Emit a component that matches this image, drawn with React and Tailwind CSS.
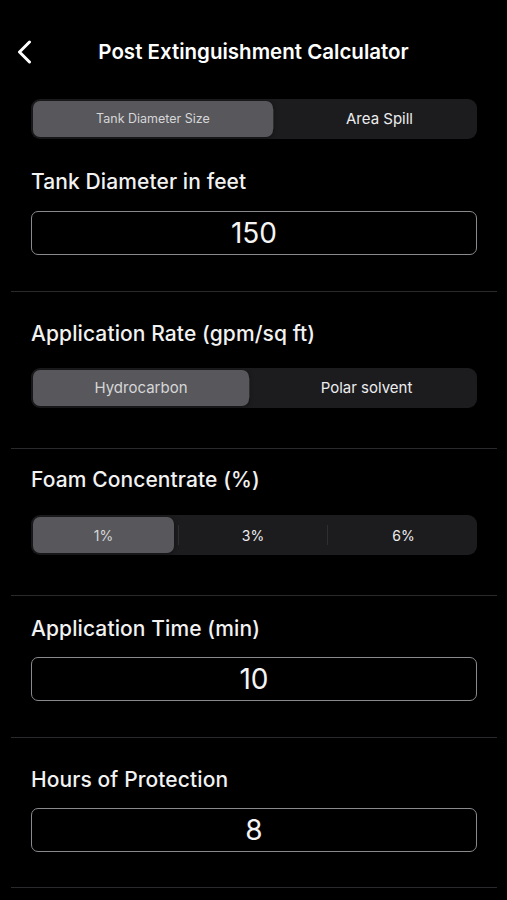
import React, { useState } from 'react';

const Segmented = ({ options, widths, value, onChange, textClass }) => {
    return (
        <div className="mx-[31px] w-[446px] h-[40px] rounded-[9px] bg-[#1c1c1e] p-[2px] flex">
            {options.map((opt, i) => {
                const selected = value === i;
                return (
                    <div key={opt} className={`flex items-center ${widths[i]}`}>
                        {i > 0 && <div className="w-px h-[20px] bg-[#2e2e31]" />}
                        <button
                            type="button"
                            onClick={() => onChange(i)}
                            className={`flex-1 h-full rounded-[7px] flex items-center justify-center ${textClass[i]} ${selected
                                ? 'bg-[#58585c] text-[#d6d6d8] shadow-[0_1px_4px_rgba(0,0,0,0.4)]'
                                : 'text-[#ececee]'
                                }`}
                        >
                            {opt}
                        </button>
                    </div>
                );
            })}
        </div>
    );
};

const Label = ({ children, className }) => (
    <div className={`mx-[31px] h-[24px] leading-[24px] text-[21px] font-medium text-[#f2f2f2] tracking-[0.1px] ${className}`}>
        {children}
    </div>
);

const NumberField = ({ value, onChange, className }) => (
    <div className={`mx-[31px] w-[446px] h-[44px] rounded-[7px] border border-[#8a8a8e] flex items-center justify-center ${className}`}>
        <input
            value={value}
            onChange={(e) => onChange(e.target.value)}
            className="w-full bg-transparent text-center text-[28px] font-normal text-[#f4f4f4] outline-none"
        />
    </div>
);

const Divider = ({ className }) => (
    <div className={`ml-[11px] w-[486px] h-px bg-[#2a2a2c] ${className}`} />
);

export default function App() {
    const [mode, setMode] = useState(0);
    const [rate, setRate] = useState(0);
    const [foam, setFoam] = useState(0);
    const [diameter, setDiameter] = useState('150');
    const [time, setTime] = useState('10');
    const [hours, setHours] = useState('8');

    return (
        <div className="w-[507px] min-h-[900px] bg-black text-white font-['Inter',sans-serif] overflow-hidden">
            {/* Header */}
            <div className="mt-[30px] h-[44px] grid grid-cols-[1fr_auto_1fr] items-center">
                <div className="pl-[17px] flex items-center">
                    <svg width="15" height="24" viewBox="0 0 15 24" fill="none">
                        <polyline
                            points="12.5,2 2.5,12 12.5,22"
                            stroke="#ffffff"
                            strokeWidth="3"
                            strokeLinecap="round"
                            strokeLinejoin="round"
                        />
                    </svg>
                </div>
                <div className="text-[20.5px] font-semibold text-white">
                    Post Extinguishment Calculator
                </div>
                <div />
            </div>

            {/* Mode */}
            <div className="mt-[25px]">
                <Segmented
                    options={['Tank Diameter Size', 'Area Spill']}
                    widths={['w-[240px]', 'flex-1']}
                    value={mode}
                    onChange={setMode}
                    textClass={['text-[12.5px]', 'text-[15px] pl-[10px]']}
                />
            </div>

            <Label className="mt-[31px]">Tank Diameter in feet</Label>
            <NumberField value={diameter} onChange={setDiameter} className="mt-[17px]" />

            <Divider className="mt-[36px]" />

            <Label className="mt-[30px]">Application Rate (gpm/sq ft)</Label>
            <div className="mt-[22px]">
                <Segmented
                    options={['Hydrocarbon', 'Polar solvent']}
                    widths={['w-[216px]', 'flex-1']}
                    value={rate}
                    onChange={setRate}
                    textClass={['text-[15px]', 'text-[15px] pl-[8px]']}
                />
            </div>

            <Divider className="mt-[40px]" />

            <Label className="mt-[19px]">Foam Concentrate (%)</Label>
            <div className="mt-[23px]">
                <Segmented
                    options={['1%', '3%', '6%']}
                    widths={['w-[141px]', 'w-[153px] pl-[4px]', 'flex-1']}
                    value={foam}
                    onChange={setFoam}
                    textClass={['text-[14px]', 'text-[14px]', 'text-[14px] pl-[4px]']}
                />
            </div>

            <Divider className="mt-[40px]" />

            <Label className="mt-[21px]">Application Time (min)</Label>
            <NumberField value={time} onChange={setTime} className="mt-[16px]" />

            <Divider className="mt-[36px]" />

            <Label className="mt-[30px]">Hours of Protection</Label>
            <NumberField value={hours} onChange={setHours} className="mt-[16px]" />

            <Divider className="mt-[35px]" />
        </div>
    );
}
